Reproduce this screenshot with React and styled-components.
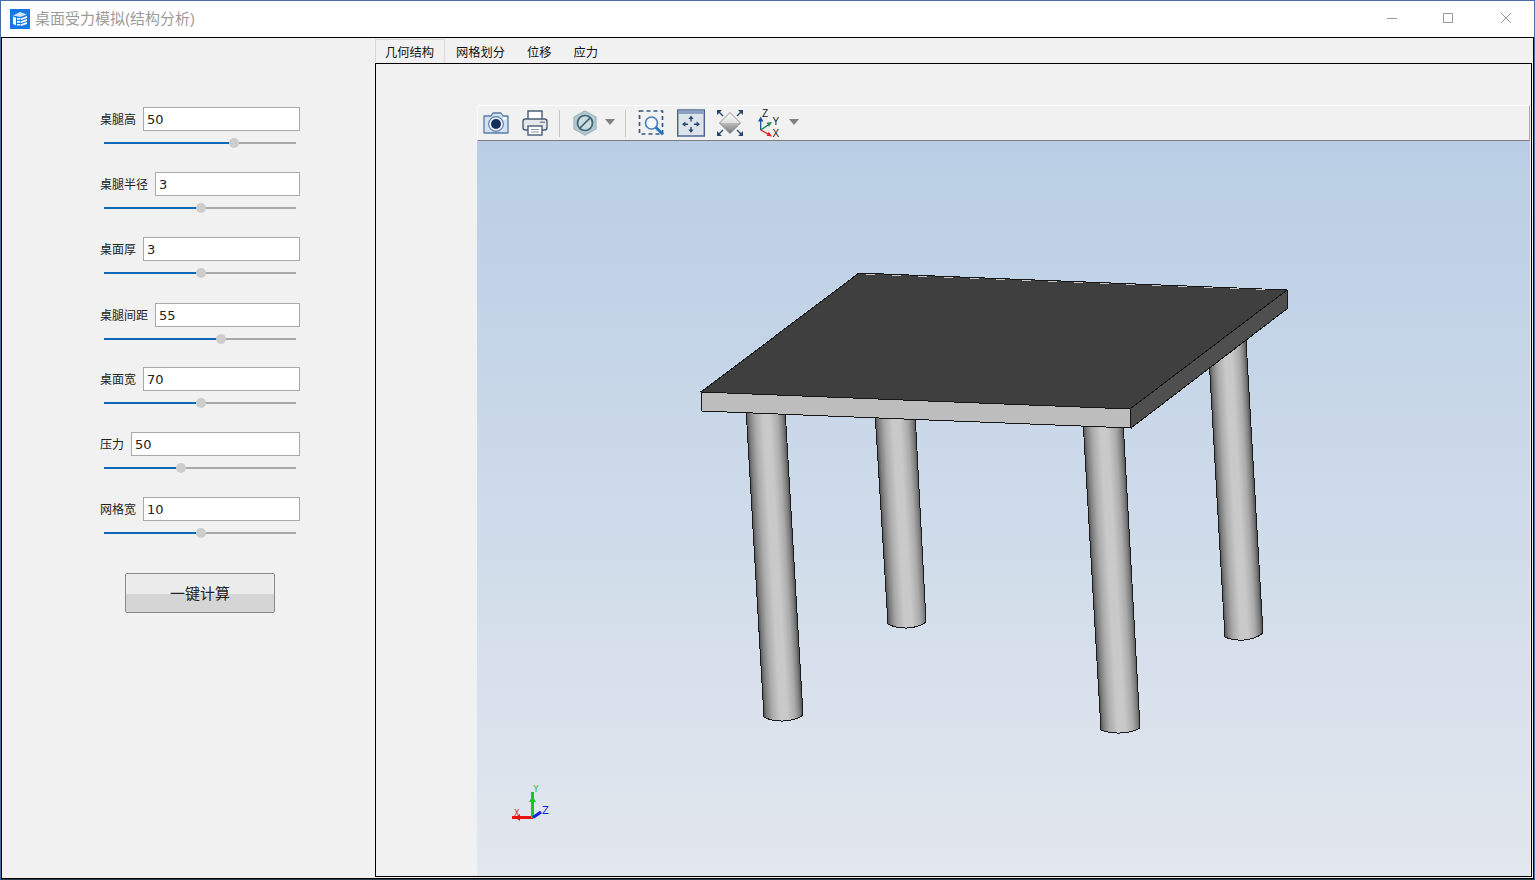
import React from "react";
import styled, { createGlobalStyle } from "styled-components";

const cjk = `"Liberation Sans", "Noto Sans CJK SC", sans-serif`;

const GlobalStyle = createGlobalStyle`
  html, body {
    margin: 0;
    padding: 0;
    background: #fff;
    overflow: hidden;
  }
  * {
    box-sizing: border-box;
  }
`;

const Window = styled.div`
  width: 1535px;
  height: 880px;
  display: flex;
  flex-direction: column;
  background: #fff;
  border: 1px solid #4a6da5;
  border-bottom-color: #24404f;
  font-family: ${cjk};
`;

const TitleBar = styled.div`
  height: 36px;
  flex: none;
  display: flex;
  align-items: center;
  padding: 0 0 0 9px;
  background: #fff;
`;

const TitleText = styled.span`
  margin-left: 5px;
  font-size: 15px;
  line-height: 20px;
  color: #9b9b9b;
  flex: 1;
`;

const WinControls = styled.div`
  display: flex;
  align-items: center;
  margin: 0 22px 2px 0;
  gap: 44px;
`;

const WinButton = styled.svg`
  display: block;
  width: 12px;
  height: 12px;
  shape-rendering: crispEdges;
`;

const CloseButton = styled.svg`
  display: block;
  width: 12px;
  height: 12px;
  margin-left: 2px;
`;

const Main = styled.div`
  flex: 1;
  min-height: 0;
  display: flex;
  border: 1px solid #000;
  background: #f1f1f1;
`;

const LeftPanel = styled.div`
  width: 373px;
  flex: none;
  padding: 69px 0 0 97px;
`;

const Form = styled.div`
  width: 201px;
  display: flex;
  flex-direction: column;
`;

const Field = styled.div`
  height: ${(p) => p.$h}px;
`;

const FieldRow = styled.div`
  display: flex;
  align-items: center;
  gap: 7px;
  height: 24px;
`;

const Label = styled.label`
  margin: 0 0 1px 1px;
  font-size: 12px;
  color: #222;
  white-space: nowrap;
`;

const TextInput = styled.input`
  flex: 1;
  min-width: 0;
  height: 24px;
  padding: 1px 3px 0;
  border: 1px solid #a9a9a9;
  border-radius: 0;
  outline: none;
  background: #fff;
  color: #222;
  font-family: "DejaVu Sans", sans-serif;
  font-size: 13px;
`;

const SliderTrack = styled.div`
  position: relative;
  height: 2px;
  margin: 11px 4px 0 5px;
  background: #a9a9a9;
`;

const SliderFill = styled.div`
  height: 100%;
  background: #0f68b8;
`;

const SliderThumb = styled.div`
  position: absolute;
  top: -4px;
  width: 10px;
  height: 10px;
  margin-left: -5px;
  border-radius: 50%;
  background: #cdcdcd;
`;

const RunButton = styled.button`
  width: 150px;
  height: 40px;
  margin: 11px 0 0 26px;
  padding: 0 0 2px;
  border: 1px solid #8a8a8a;
  border-radius: 2px;
  background: linear-gradient(#ececec 52%, #d5d5d5 52%);
  color: #222;
  font-family: ${cjk};
  font-size: 15px;
`;

const TabArea = styled.div`
  flex: 1;
  min-width: 0;
  display: flex;
  flex-direction: column;
  padding: 1px 1px 1px 0;
`;

const TabBar = styled.div`
  display: flex;
  height: 24px;
  flex: none;
`;

const Tab = styled.div`
  display: flex;
  align-items: center;
  justify-content: center;
  padding: ${(p) => (p.$active ? "1px 10px 0 9px" : "2px 11px 0")};
  font-size: 12.25px;
  color: #111;
  border: 1px solid ${(p) => (p.$active ? "#d9d9d9" : "transparent")};
  border-width: ${(p) => (p.$active ? "1px 1px 0" : "0")};
`;

const TabPanel = styled.div`
  flex: 1;
  min-height: 0;
  display: flex;
  flex-direction: column;
  border: 1px solid #000;
  padding: 41px 1px 0 101px;
`;

const Viewer = styled.div`
  flex: 1;
  min-height: 0;
  display: flex;
  flex-direction: column;
`;

const Toolbar = styled.div`
  height: 36px;
  flex: none;
  display: flex;
  align-items: center;
  background: #f1f1f1;
  border-top: 1px solid #fff;
  border-left: 1px solid #fff;
  border-right: 1px solid #a8a8a8;
  border-bottom: 1px solid #7d7d7d;
`;

const ToolSlot = styled.div`
  width: 39px;
  height: 28px;
  flex: none;
  display: flex;
  align-items: center;
  justify-content: center;
  margin-left: ${(p) => p.$ml || 0}px;
`;

const ToolSep = styled.div`
  width: 1px;
  height: 27px;
  flex: none;
  background: #c6c6c6;
  margin-left: ${(p) => p.$ml}px;
`;

const DropArrow = styled.div`
  width: 0;
  height: 0;
  flex: none;
  margin: 0 1px 2px;
  border-left: 5.5px solid transparent;
  border-right: 5.5px solid transparent;
  border-top: 6px solid #7f7f7f;
`;

const Scene = styled.div`
  flex: 1;
  min-height: 0;
  background: linear-gradient(#b9cee5, #e3e7ee);
`;

const SceneSvg = styled.svg`
  display: block;
  width: 100%;
  height: 100%;
`;

const AxisText = styled.text`
  font-family: "DejaVu Sans", sans-serif;
  font-size: ${(p) => p.$size}px;
`;

const IconText = styled.text`
  font-family: "Liberation Sans", sans-serif;
  font-size: 10px;
  fill: #222;
`;

const fields = [
  { label: "桌腿高", value: "50", pos: 67.7, h: 65 },
  { label: "桌腿半径", value: "3", pos: 50.5, h: 65 },
  { label: "桌面厚", value: "3", pos: 50.5, h: 66 },
  { label: "桌腿间距", value: "55", pos: 61, h: 64 },
  { label: "桌面宽", value: "70", pos: 50.5, h: 65 },
  { label: "压力", value: "50", pos: 40, h: 65 },
  { label: "网格宽", value: "10", pos: 50.5, h: 65 },
];

const tabs = ["几何结构", "网格划分", "位移", "应力"];

// scene offset: svg origin sits at page (477, 141)
const OX = 477;
const OY = 141;

// leg outlines in page coordinates; the foot is a tilted ellipse: yl/yr are its ends, yb its lowest point
const legs = [
  { id: "leg3", tl: 1208, tr: 1246, ty: 340, bl: 1225, br: 1263, yl: 637, yr: 633, yb: 640 },
  { id: "leg1", tl: 875, tr: 915, ty: 412, bl: 888, br: 926, yl: 624, yr: 622, yb: 628 },
  { id: "leg0", tl: 746, tr: 785, ty: 408, bl: 764, br: 803, yl: 717, yr: 715, yb: 721 },
  { id: "leg2", tl: 1083, tr: 1123, ty: 420, bl: 1101, br: 1140, yl: 730, yr: 728, yb: 733 },
];

const pt = (x, y) => `${x - OX},${y - OY}`;

const LegGradient = ({ leg }) => {
  const x1 = leg.tl - OX;
  const x2 = leg.tr - OX;
  const y = leg.ty - OY;
  const dx = leg.bl - leg.tl;
  const dy = leg.yl - leg.ty;
  const w = x2 - x1;
  // gradient runs square to the leg's own axis
  const k = (w * dx) / (dx * dx + dy * dy);
  return (
    <linearGradient
      id={leg.id}
      gradientUnits="userSpaceOnUse"
      x1={x1}
      y1={y}
      x2={x2 - k * dx}
      y2={y - k * dy}
    >
      <stop offset="0" stopColor="#555" />
      <stop offset="0.08" stopColor="#808080" />
      <stop offset="0.22" stopColor="#ababab" />
      <stop offset="0.42" stopColor="#c9c9c9" />
      <stop offset="0.6" stopColor="#c9c9c9" />
      <stop offset="0.8" stopColor="#ababab" />
      <stop offset="0.92" stopColor="#808080" />
      <stop offset="1" stopColor="#505050" />
    </linearGradient>
  );
};

const Leg = ({ leg }) => {
  const cy = (8 * leg.yb - leg.yl - leg.yr) / 6 - OY;
  const foot = `M${pt(leg.br, leg.yr)} C${leg.br - 10 - OX},${cy} ${leg.bl + 10 - OX},${cy} ${pt(leg.bl, leg.yl)}`;
  return (
    <g shapeRendering="crispEdges">
      <path d={`${foot} L${pt(leg.tl, leg.ty)} L${pt(leg.tr, leg.ty)} Z`} fill={`url(#${leg.id})`} />
      <path
        d={`${foot} L${pt(leg.tl, leg.ty)} M${pt(leg.br, leg.yr)} L${pt(leg.tr, leg.ty)}`}
        fill="none"
        stroke="#1c1c1c"
        strokeWidth="1"
      />
    </g>
  );
};

const Table = () => (
  <SceneSvg>
    <defs>
      {legs.map((leg) => (
        <LegGradient key={leg.id} leg={leg} />
      ))}
    </defs>
    {legs.map((leg) => (
      <Leg key={leg.id} leg={leg} />
    ))}
    <g shapeRendering="crispEdges" stroke="#161616" strokeWidth="1">
      <polygon
        points={`${pt(859, 273)} ${pt(1287, 290)} ${pt(1130, 409)} ${pt(701, 392)}`}
        fill="#3f3f3f"
      />
      <polygon
        points={`${pt(701, 392)} ${pt(1130, 409)} ${pt(1131, 428)} ${pt(702, 411)}`}
        fill="#bdbdbd"
      />
      <polygon
        points={`${pt(1130, 409)} ${pt(1287, 290)} ${pt(1288, 308)} ${pt(1131, 428)}`}
        fill="#4f4f4f"
      />
    </g>
    <line
      x1={866 - OX}
      y1={274 - OY}
      x2={1270 - OX}
      y2={290 - OY}
      stroke="#c9c9c9"
      strokeWidth="1"
      strokeDasharray="9 17"
      shapeRendering="crispEdges"
    />
    <g>
      <line x1="56" y1="676.5" x2="35" y2="676.5" stroke="#ee1111" strokeWidth="3" />
      <polygon points="43,673 43,680 38,676.5" fill="#ee1111" />
      <line x1="55.5" y1="677" x2="55.5" y2="651" stroke="#11cc22" strokeWidth="3" />
      <polygon points="52,661 59,661 55.5,655" fill="#11cc22" />
      <line x1="56" y1="676.5" x2="64" y2="671" stroke="#1122dd" strokeWidth="3" />
      <AxisText x="37" y="675" fill="#dd2222" $size={8}>X</AxisText>
      <AxisText x="56.5" y="651" fill="#22bb33" $size={8}>Y</AxisText>
      <AxisText x="65" y="672.5" fill="#1122dd" $size={10}>Z</AxisText>
    </g>
  </SceneSvg>
);

const CameraIcon = () => (
  <svg width="28" height="26" viewBox="0 0 28 26">
    <path d="M2 6h7l2-3h8l2 3h5v17H2z" fill="#d4e3f3" stroke="#5a7ba3" strokeWidth="1.3" strokeLinejoin="round" />
    <circle cx="14" cy="14" r="7.4" fill="#e8f0f8" stroke="#5a7ba3" strokeWidth="1.1" />
    <circle cx="14" cy="14" r="5" fill="#16305c" />
    <rect x="21" y="7.5" width="3" height="2" fill="#fff" />
  </svg>
);

const PrinterIcon = () => (
  <svg width="28" height="28" viewBox="0 0 28 28">
    <path d="M7 10V2h14v8" fill="#fff" stroke="#4a5d75" strokeWidth="1.4" />
    <rect x="2" y="10" width="24" height="11" rx="2.5" fill="#e4e8ec" stroke="#4a5d75" strokeWidth="1.4" />
    <rect x="19" y="12.5" width="5" height="1.5" fill="#7f8b99" />
    <rect x="7" y="17" width="14" height="9" fill="#fff" stroke="#4a5d75" strokeWidth="1.4" />
    <path d="M10 20.5h8M10 23h8" stroke="#8d98a5" strokeWidth="1.2" />
  </svg>
);

const HexBlockIcon = () => (
  <svg width="24" height="26" viewBox="0 0 24 26">
    <polygon points="12,1 23,7 23,19 12,25 1,19 1,7" fill="#b5c9d1" stroke="#9db5be" strokeWidth="1.2" />
    <circle cx="12" cy="13" r="7.5" fill="#cddbe0" stroke="#386670" strokeWidth="1.7" />
    <line x1="7" y1="18" x2="17" y2="8" stroke="#386670" strokeWidth="1.7" />
  </svg>
);

const ZoomBoxIcon = () => (
  <svg width="28" height="28" viewBox="0 0 28 28">
    <rect x="1.5" y="2" width="23" height="23" fill="none" stroke="#3d5880" strokeWidth="1.7" strokeDasharray="4 3" />
    <circle cx="13.5" cy="14" r="6" fill="#f4f8fc" stroke="#4a82b4" strokeWidth="1.7" />
    <line x1="18" y1="18.5" x2="25" y2="25.5" stroke="#1f78c4" strokeWidth="3" />
  </svg>
);

const FitIcon = () => (
  <svg width="28" height="28" viewBox="0 0 28 28">
    <rect x="0.7" y="1" width="26.6" height="26" fill="#dde3ea" stroke="#46618b" strokeWidth="1.4" />
    <rect x="1" y="1.5" width="26" height="3.5" fill="#8aa1c0" />
    <path d="M14 9v3.5M14 18v3.5M7.5 15.2H11M17 15.2h3.5" stroke="#27466f" strokeWidth="1.4" />
    <path d="M14 6.5l-2.6 3.4h5.2zM14 24l-2.6-3.4h5.2zM5 15.2l3.4-2.6v5.2zM23 15.2l-3.4-2.6v5.2z" fill="#27466f" />
  </svg>
);

const DiamondIcon = () => (
  <svg width="28" height="28" viewBox="0 0 28 28">
    <defs>
      <linearGradient id="diamondHigh" x1="0" y1="0" x2="0" y2="1">
        <stop offset="0" stopColor="#ffffff" />
        <stop offset="1" stopColor="#dedede" />
      </linearGradient>
      <linearGradient id="diamondLow" x1="0" y1="0" x2="0" y2="1">
        <stop offset="0" stopColor="#bdbdbd" />
        <stop offset="1" stopColor="#777" />
      </linearGradient>
    </defs>
    <polygon points="14,3.5 24.5,14 3.5,14" fill="url(#diamondHigh)" />
    <polygon points="3.5,14 24.5,14 14,24.5" fill="url(#diamondLow)" />
    <polygon points="14,3.5 24.5,14 14,24.5 3.5,14" fill="none" stroke="#6c7580" strokeWidth="0.8" />
    <path d="M3 3L7 7M25 3L21 7M3 25L7 21M25 25L21 21" stroke="#26486f" strokeWidth="1.4" />
    <path d="M1 1h5L1 6zM27 1h-5L27 6zM1 27h5L1 22zM27 27h-5L27 22z" fill="#26486f" />
  </svg>
);

const AxesIcon = () => (
  <svg width="28" height="28" viewBox="0 0 28 28">
    <line x1="5.7" y1="21" x2="5.7" y2="11" stroke="#1c4fa0" strokeWidth="1.3" />
    <polygon points="5.7,7.5 3,12.5 8.4,12.5" fill="#1c4fa0" />
    <line x1="5.7" y1="21" x2="13" y2="16" stroke="#178a4c" strokeWidth="1.3" />
    <polygon points="17,13 11.5,13.8 14,17.8" fill="#178a4c" />
    <line x1="5.7" y1="21" x2="13" y2="25" stroke="#e02020" strokeWidth="1.3" />
    <polygon points="17,27.5 11.5,26.8 13.8,22.8" fill="#e02020" />
    <IconText x="7" y="8">Z</IconText>
    <IconText x="17.5" y="15.5">Y</IconText>
    <IconText x="17.5" y="27.5">X</IconText>
  </svg>
);

const App = () => (
  <Window>
    <GlobalStyle />
    <TitleBar>
      <svg width="20" height="20" viewBox="0 0 20 20">
        <rect width="20" height="20" fill="#1677e6" />
        <path d="M3 6.5L10 3l7 2.5-7 2.5z" fill="#cfe2fb" />
        <path d="M3 7.5l3 1.2v7.6l-3-1.3z" fill="#fff" />
        <path d="M7 9v1.8h3.4V9zM7 12v1.8h3.4V12zM7 15v1.6h3.4V15z" fill="#fff" />
        <path d="M11 9.2l6-2.2v1.9l-6 2.2zM11 12.2l6-2.2v1.9l-6 2.2zM11 15.2l6-2.2v1.9l-6 2.2z" fill="#fff" />
      </svg>
      <TitleText>桌面受力模拟(结构分析)</TitleText>
      <WinControls>
        <WinButton viewBox="0 0 12 12">
          <line x1="1" y1="6.5" x2="11" y2="6.5" stroke="#9a9a9a" />
        </WinButton>
        <WinButton viewBox="0 0 12 12">
          <rect x="1.5" y="1.5" width="9" height="9" fill="none" stroke="#9a9a9a" />
        </WinButton>
        <CloseButton viewBox="0 0 12 12">
          <path d="M1 1l10 10M11 1L1 11" stroke="#9a9a9a" strokeWidth="1" fill="none" />
        </CloseButton>
      </WinControls>
    </TitleBar>
    <Main>
      <LeftPanel>
        <Form>
          {fields.map((f) => (
            <Field key={f.label} $h={f.h}>
              <FieldRow>
                <Label>{f.label}</Label>
                <TextInput defaultValue={f.value} />
              </FieldRow>
              <SliderTrack>
                <SliderFill style={{ width: `${f.pos}%` }} />
                <SliderThumb style={{ left: `${f.pos}%` }} />
              </SliderTrack>
            </Field>
          ))}
          <RunButton>一键计算</RunButton>
        </Form>
      </LeftPanel>
      <TabArea>
        <TabBar>
          {tabs.map((t, i) => (
            <Tab key={t} $active={i === 0}>
              {t}
            </Tab>
          ))}
        </TabBar>
        <TabPanel>
          <Viewer>
            <Toolbar>
              <ToolSlot $ml={-2}>
                <CameraIcon />
              </ToolSlot>
              <ToolSlot>
                <PrinterIcon />
              </ToolSlot>
              <ToolSep $ml={5} />
              <ToolSlot $ml={5}>
                <HexBlockIcon />
              </ToolSlot>
              <DropArrow />
              <ToolSep $ml={9} />
              <ToolSlot $ml={6}>
                <ZoomBoxIcon />
              </ToolSlot>
              <ToolSlot>
                <FitIcon />
              </ToolSlot>
              <ToolSlot>
                <DiamondIcon />
              </ToolSlot>
              <ToolSlot>
                <AxesIcon />
              </ToolSlot>
              <DropArrow />
            </Toolbar>
            <Scene>
              <Table />
            </Scene>
          </Viewer>
        </TabPanel>
      </TabArea>
    </Main>
  </Window>
);

export default App;
